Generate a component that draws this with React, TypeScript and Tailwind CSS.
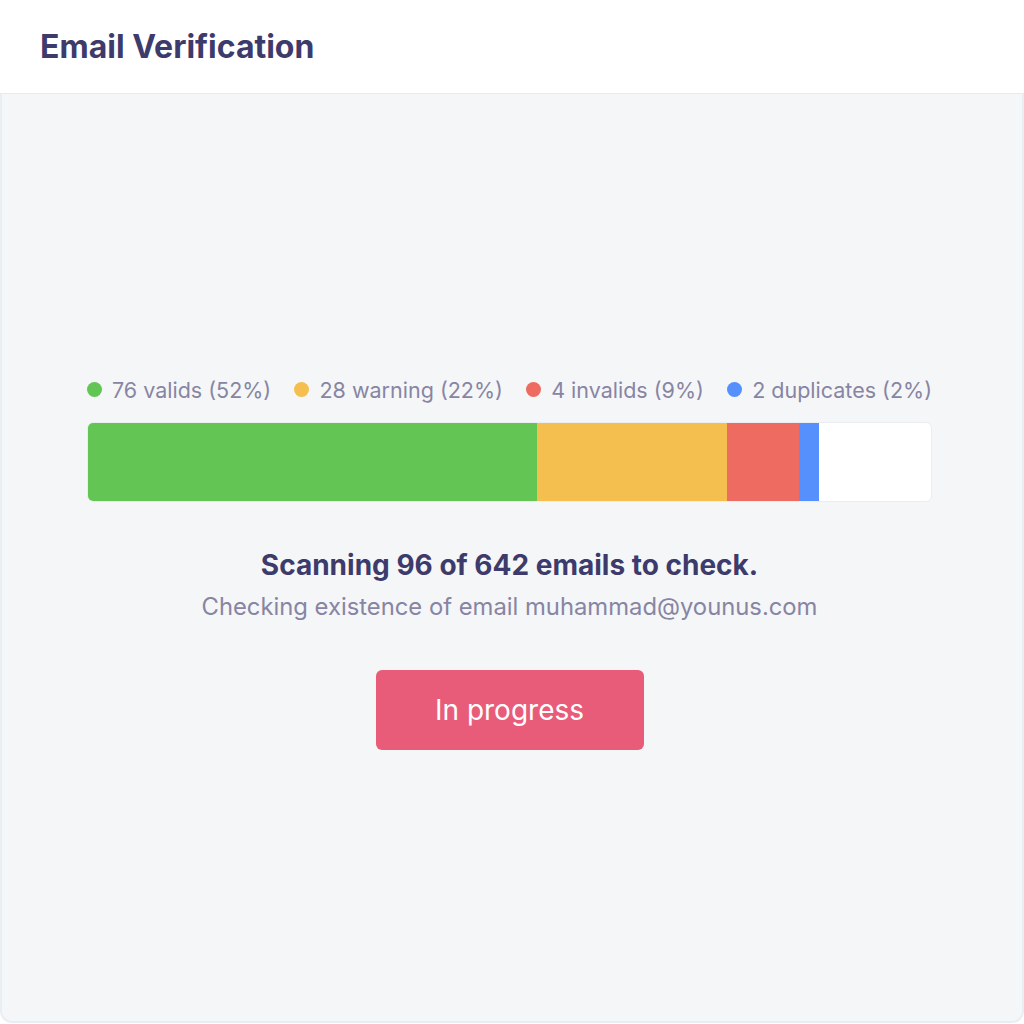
import React from 'react';

const LEGEND = [
  { label: '76 valids (52%)', color: 'bg-[#62c554]' },
  { label: '28 warning (22%)', color: 'bg-[#f5bf50]' },
  { label: '4 invalids (9%)', color: 'bg-[#ed6b60]' },
  { label: '2 duplicates (2%)', color: 'bg-[#5590fc]' },
];

export default function App() {
  return (
    <div className="w-[1024px] h-[1024px] bg-white flex flex-col font-['Inter',sans-serif]">
      {/* Header */}
      <div className="h-[94px] shrink-0 flex items-center px-10 border-b border-[#e6ebf0]">
        <h1 className="text-[32px] font-bold text-[#3d3b6b]">Email Verification</h1>
      </div>

      {/* Body */}
      <div className="flex-1 mb-[1px] bg-[#f5f6f8] border-x-2 border-b-2 border-[#e9eef2] rounded-b-[12px] flex flex-col items-center justify-center pl-[85px] pr-[90px] pt-[10px]">
        <div className="w-full flex justify-between items-center text-[21.5px] leading-[28px] text-[#8785a3] mb-[18px]">
          {LEGEND.map((item) => (
            <div key={item.label} className="flex items-center gap-[10px]">
              <span className={`w-[15px] h-[15px] rounded-full ${item.color}`} />
              <span>{item.label}</span>
            </div>
          ))}
        </div>

        <div className="w-full h-[80px] flex rounded-[6px] overflow-hidden bg-white border border-[#e9eef2]">
          <div className="w-[450px] bg-[#62c554] -my-px -ml-px" />
          <div className="w-[190px] bg-[#f5bf50] -my-px" />
          <div className="w-[72px] bg-[#ed6b60] -my-px" />
          <div className="w-[20px] bg-[#5590fc] -my-px" />
        </div>

        <h2 className="mt-[46px] text-[28px] font-bold text-[#3d3b6b] leading-[35px]">
          Scanning 96 of 642 emails to check.
        </h2>
        <p className="mt-[8px] text-[23.8px] leading-[32px] text-[#8785a3]">
          Checking existence of email muhammad@younus.com
        </p>

        <button className="mt-[47px] w-[268px] h-[80px] rounded-[6px] bg-[#e85c79] text-white text-[28px]">
          In progress
        </button>
      </div>
    </div>
  );
}
